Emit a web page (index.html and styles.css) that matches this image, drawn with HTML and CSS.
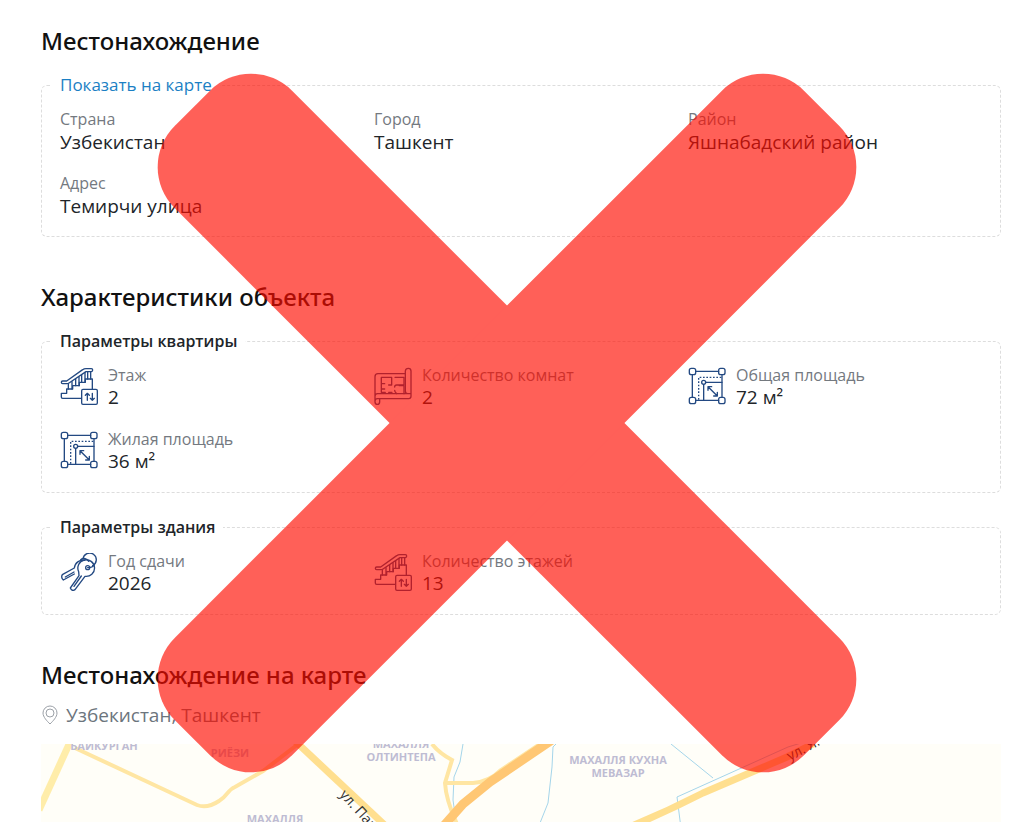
FILE: index.html
```html
<!DOCTYPE html>
<html lang="ru">
<head>
<meta charset="UTF-8">
<meta name="viewport" content="width=device-width, initial-scale=1">
<title>Местонахождение</title>
<link rel="stylesheet" href="styles.css">
</head>
<body>

<svg class="sprite" aria-hidden="true">
	<symbol id="stairs" viewBox="0 0 114 114">
		<path d="M8 42H20L68 8Q72 5 78 5H94Q98 5 98 9T94 14H78L27 48Q24 50 20 50H8Q4 50 4 46T8 42Z"/>
		<path d="M25 50V66M36 44V66M47 36V56M57 30V56M65 24V46M75 16V46M83 14V36M92 14V36"/>
		<path d="M64 94H8Q4 94 4 90V79H20V66H38V56H58V46H76V36H97V66"/>
		<rect x="65" y="67" width="47" height="45" rx="4"/>
		<path d="M82 100V79M76 85L82 79L88 85M97 79V100M91 94L97 100L103 94"/>
	</symbol>
	<symbol id="area" viewBox="0 0 114 114">
		<rect x="4" y="4" width="19" height="19" rx="6"/>
		<rect x="92" y="4" width="19" height="19" rx="6"/>
		<rect x="4" y="91" width="19" height="19" rx="6"/>
		<rect x="92" y="91" width="19" height="19" rx="6"/>
		<path d="M23 13H92M23 100H92M13 23V91M102 23V91"/>
		<path class="dots" d="M32 98V31H100"/>
		<circle cx="47" cy="46" r="6"/>
		<path d="M53 46H102M47 52V100M60 59L88 87M60 70V59H71M77 87H88V76"/>
	</symbol>
	<symbol id="plan" viewBox="0 0 114 114">
		<path d="M93 20H12Q3 20 3 29V104Q3 112 10 112T17 104V95H104Q111 95 111 88V12Q111 4 103 4T94 12V72Q94 80 101 80H111M3 103V88Q3 80 11 80H101M17 95H10Q3 95 3 103"/>
		<path d="M32 66H22V31H53V54H44M63 31H90V54H68Q62 54 62 60M22 50H32M22 66V76H34M44 76H54M76 56H90V80M62 70Q62 76 68 80"/>
	</symbol>
	<symbol id="keys" viewBox="0 0 114 114">
		<path d="M69 18A20 20 0 1 1 98 38"/>
		<path d="M74 22A26 26 0 0 0 43 45L7 65Q2 74 10 81L43 63M16 72L42 57M62 20Q70 13 80 19L86 25"/>
		<path d="M56 56A25 25 0 1 1 75 70L45 110Q36 116 31 105L57 68ZM42 100L64 69"/>
		<circle cx="83" cy="44" r="6"/>
		<path d="M83 44Q99 45 103 34"/>
	</symbol>
</svg>

<main class="page">
	<h2>Местонахождение</h2>
	<fieldset class="box place">
		<legend><a href="#map">Показать на карте</a></legend>
		<dl class="grid">
			<div><dt>Страна</dt><dd>Узбекистан</dd></div>
			<div><dt>Город</dt><dd>Ташкент</dd></div>
			<div><dt>Район</dt><dd>Яшнабадский район</dd></div>
			<div><dt>Адрес</dt><dd>Темирчи улица</dd></div>
		</dl>
	</fieldset>

	<h2 class="next">Характеристики объекта</h2>
	<fieldset class="box">
		<legend>Параметры квартиры</legend>
		<div class="grid">
			<div class="param"><svg class="icon"><use href="#stairs"/></svg><dl><dt>Этаж</dt><dd>2</dd></dl></div>
			<div class="param"><svg class="icon"><use href="#plan"/></svg><dl><dt>Количество комнат</dt><dd>2</dd></dl></div>
			<div class="param"><svg class="icon"><use href="#area"/></svg><dl><dt>Общая площадь</dt><dd>72 м²</dd></dl></div>
			<div class="param"><svg class="icon"><use href="#area"/></svg><dl><dt>Жилая площадь</dt><dd>36 м²</dd></dl></div>
		</div>
	</fieldset>
	<fieldset class="box second">
		<legend>Параметры здания</legend>
		<div class="grid">
			<div class="param"><svg class="icon"><use href="#keys"/></svg><dl><dt>Год сдачи</dt><dd>2026</dd></dl></div>
			<div class="param"><svg class="icon"><use href="#stairs"/></svg><dl><dt>Количество этажей</dt><dd>13</dd></dl></div>
		</div>
	</fieldset>

	<h2 class="next">Местонахождение на карте</h2>
	<p class="address">
		<svg class="pin" viewBox="0 0 18 20"><path d="M9 19C6 16 2 12 2 8A7 7 0 0 1 16 8C16 12 12 16 9 19Z"/><circle cx="9" cy="8" r="4"/></svg>
		Узбекистан, Ташкент
	</p>
	<div class="map" id="map">
		<svg viewBox="0 0 960 120">
			<g class="water">
				<path d="M422 0L419 18L413 33L412 56L416 84"/>
				<path d="M516 -1L512 3L511 23L507 59L497 84"/>
				<path d="M630 0L672 34"/>
				<path d="M640 84L636 53L747 3L760 -1"/>
			</g>
			<path class="road pale" d="M30 -4L-2 66"/>
			<path class="road thin" d="M34 4L156 61Q166 65 178 57C187 52 186 46 194 43L222 27L256 1"/>
			<path class="road" d="M253 -4L350 87"/>
			<path class="road thin" d="M391 0Q398 9 411 16L404 39Q405 56 416 80M404 39H432Q448 38 460 26L502 -2"/>
			<path class="road main" d="M511 -4L449 38L422 60L399 86"/>
			<path class="road" d="M586 84Q625 68 662 49L746 13L772 0"/>
			<g class="district">
				<text x="63" y="6">БАЙКУРГАН</text>
				<text x="189" y="13">РИЁЗИ</text>
				<text x="360" y="4">МАХАЛЛЯ</text>
				<text x="360" y="17">ОЛТИНТЕПА</text>
				<text x="577" y="20">МАХАЛЛЯ КУХНА</text>
				<text x="577" y="33">МЕВАЗАР</text>
				<text x="234" y="79">МАХАЛЛЯ</text>
			</g>
			<text class="street" transform="translate(298 51) rotate(48)">ул. Паркент</text>
			<text class="street" transform="translate(749 17) rotate(-28)">ул. Ян</text>
		</svg>
	</div>
</main>

<svg class="cross" viewBox="0 0 700 700" aria-hidden="true">
	<rect x="-95" y="267" width="890" height="166" rx="58" transform="rotate(45 350 350)"/>
	<rect x="-95" y="267" width="890" height="166" rx="58" transform="rotate(-45 350 350)"/>
</svg>

</body>
</html>
```
FILE: styles.css
```css
body {
	margin: 0;
	position: relative;
	background: #fff;
	color: #212529;
	font-family: "Open Sans", "Noto Sans", sans-serif;
}
.page {
	display: flex;
	flex-direction: column;
	box-sizing: border-box;
	min-height: 100vh;
	padding: 26px 24px 0 41px;
}
.sprite {
	display: none;
}
h2 {
	margin: 0 0 18px;
	color: #111;
	font-family: "Noto Sans", "Open Sans", sans-serif;
	font-size: 24px;
	font-weight: 500;
	line-height: 30px;
}
.next {
	margin-top: 45px;
}

/* dashed boxes */
.box {
	min-width: 0;
	margin: 0;
	padding: 12px 18px 20px;
	border: 1px dashed #ddd;
	border-radius: 6px;
}
.second {
	margin-top: 23px;
}
legend {
	margin-left: -8px;
	padding: 0 8px;
	font-size: 16px;
	font-weight: 600;
	line-height: 22px;
}
legend a {
	color: #1b7fc4;
	font-size: 17px;
	font-weight: 400;
	text-decoration: none;
}
.grid {
	display: grid;
	grid-template-columns: repeat(3, 1fr);
	gap: 20px;
	margin: 0;
}
dl, dd {
	margin: 0;
}
dt {
	color: #74797f;
	font-size: 16px;
	line-height: 22px;
}
dd {
	font-size: 19px;
	line-height: 22px;
}
.place {
	padding-bottom: 18px;
}
.place .grid {
	row-gap: 18px;
}
.place dd {
	line-height: 24px;
}
.param {
	display: flex;
	align-items: center;
	gap: 10px;
}
.icon {
	width: 38px;
	height: 38px;
	fill: none;
	stroke: #234982;
	stroke-width: 4;
	stroke-linejoin: round;
	stroke-linecap: round;
}
.dots {
	stroke-dasharray: 5 5;
	stroke-linecap: butt;
}

.address {
	display: flex;
	align-items: center;
	gap: 7px;
	margin: -4px 0 18px;
	color: #6c757d;
	font-size: 19px;
	line-height: 22px;
}
.pin {
	width: 18px;
	height: 20px;
	fill: none;
	stroke: #9ca1a8;
}

/* map */
.map {
	position: relative;
	flex: 1;
	min-height: 78px;
	overflow: hidden;
	background: #fffef8;
}
.map svg {
	position: absolute;
	width: 100%;
}
.water {
	fill: none;
	stroke: #a5d5ea;
}
.road {
	fill: none;
	stroke: #ffdf8f;
	stroke-width: 7;
}
.pale {
	stroke: #ffedaa;
}
.thin {
	stroke: #ffe6a3;
	stroke-width: 4;
}
.main {
	stroke: #ffc774;
	stroke-width: 9;
}
.district {
	fill: #bebcd3;
	font-size: 11px;
	font-weight: 700;
	text-anchor: middle;
}
.street {
	fill: #333;
	font-size: 14px;
}

/* red cross over the page */
.cross {
	position: absolute;
	top: 73px;
	left: 157px;
	width: 700px;
	fill: #ff0c00;
	opacity: 0.65;
	pointer-events: none;
}
```
